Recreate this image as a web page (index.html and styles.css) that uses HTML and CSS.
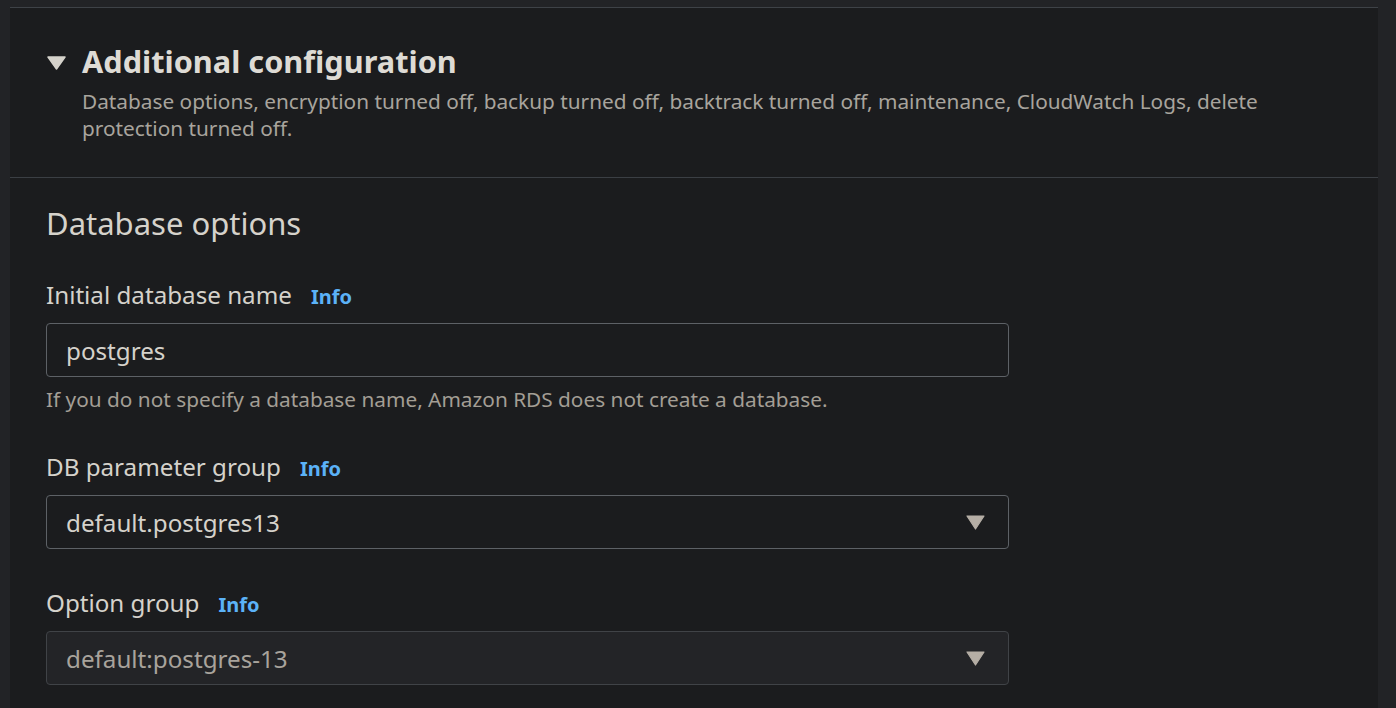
FILE: index.html
```html
<!DOCTYPE html>
<html lang="en">
<head>
<meta charset="utf-8">
<title>Additional configuration</title>
<link rel="stylesheet" href="styles.css">
</head>
<body>
<div class="page">
  <div class="panel">
    <div class="header">
      <div class="header-row">
        <svg class="caret" width="19" height="14" viewBox="0 0 19 14"><path d="M1 1 H18 L9.5 13 Z" fill="#d5d2cb" stroke="#d5d2cb" stroke-width="1.5" stroke-linejoin="round"/></svg>
        <div class="header-text">
          <h2 class="title">Additional configuration</h2>
          <p class="desc">Database options, encryption turned off, backup turned off, backtrack turned off, maintenance, CloudWatch Logs, delete protection turned off.</p>
        </div>
      </div>
    </div>
    <div class="body">
      <h3 class="section-title">Database options</h3>

      <div class="field">
        <div class="label"><span>Initial database name</span><span class="info">Info</span></div>
        <div class="input">postgres</div>
        <div class="hint">If you do not specify a database name, Amazon RDS does not create a database.</div>
      </div>

      <div class="field">
        <div class="label"><span>DB parameter group</span><span class="info">Info</span></div>
        <div class="input select">
          <span>default.postgres13</span>
          <svg class="arrow" width="19" height="15" viewBox="0 0 19 15"><path d="M1 1 H18 L9.5 14 Z" fill="#b5aea5" stroke="#b5aea5" stroke-width="1.2" stroke-linejoin="round"/></svg>
        </div>
      </div>

      <div class="field">
        <div class="label"><span>Option group</span><span class="info">Info</span></div>
        <div class="input select disabled">
          <span>default:postgres-13</span>
          <svg class="arrow" width="19" height="15" viewBox="0 0 19 15"><path d="M1 1 H18 L9.5 14 Z" fill="#b5aea5" stroke="#b5aea5" stroke-width="1.2" stroke-linejoin="round"/></svg>
        </div>
      </div>
    </div>
  </div>
</div>
</body>
</html>
```
FILE: styles.css
```css
html, body {
  margin: 0;
  padding: 0;
  background: #222326;
  height: 100%;
  overflow: hidden;
}
body {
  font-family: "Noto Sans", "Open Sans", sans-serif;
  color: #d5d2cb;
}
.page {
  padding: 7px 18px 0 10px;
  height: 100%;
  box-sizing: border-box;
}
.panel {
  background: #1b1c1e;
  border-top: 1px solid #3e4247;
  height: 100%;
}
.header {
  padding: 34px 36px 35px 37px;
  border-bottom: 1px solid #3b3f44;
}
.header-row {
  display: flex;
  align-items: flex-start;
  gap: 16px;
}
.caret {
  margin-top: 14px;
  flex: none;
}
.title {
  margin: 0;
  font-size: 30.7px;
  line-height: 38px;
  font-weight: 700;
  color: #dedbd5;
}
.desc {
  margin: 8px 0 0 0;
  font-size: 20.8px;
  line-height: 27px;
  color: #a8a49d;
}
.body {
  padding: 21px 36px 0 36px;
  width: 963px;
}
.section-title {
  margin: 0 0 33px 0;
  font-size: 31px;
  line-height: 48px;
  font-weight: 400;
  color: #d5d2cb;
}
.field {
  margin-bottom: 39px;
}
.label {
  display: flex;
  align-items: baseline;
  gap: 19px;
  height: 30px;
  line-height: 30px;
  font-size: 24.2px;
  color: #d5d2cb;
  margin-bottom: 13px;
}
.info {
  font-size: 20px;
  font-weight: 700;
  color: #5bb2f7;
}
.input {
  box-sizing: border-box;
  height: 54px;
  border: 1px solid #5d6166;
  border-radius: 4px;
  padding: 0 19px;
  display: flex;
  align-items: center;
  font-size: 24.2px;
  color: #d5d2cb;
}
.select {
  justify-content: space-between;
  padding-right: 23px;
}
.disabled {
  background: #232427;
  border-color: #404347;
  color: #a8a39c;
}
.hint {
  margin-top: 9px;
  font-size: 20.8px;
  line-height: 27px;
  color: #a39e95;
}
.arrow {
  flex: none;
}
```
